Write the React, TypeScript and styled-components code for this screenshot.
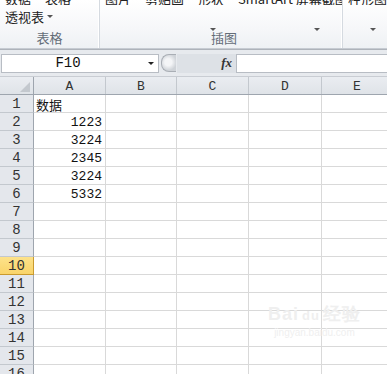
import * as React from "react";
import styled, { createGlobalStyle } from "styled-components";

const GlobalStyle = createGlobalStyle`
  html, body { margin: 0; padding: 0; background: #ffffff; overflow: hidden; }
  body { font-family: "Noto Sans CJK SC", "Noto Sans", sans-serif; }
`;

const columns = ["A", "B", "C", "D", "E"];
const colWidths = [72, 71, 72, 73, 71];
const values: Record<number, { text: string; align: "left" | "right" }> = {
  1: { text: "数据", align: "left" },
  2: { text: "1223", align: "right" },
  3: { text: "3224", align: "right" },
  4: { text: "2345", align: "right" },
  5: { text: "3224", align: "right" },
  6: { text: "5332", align: "right" },
};
const rows = Array.from({ length: 16 }, (_, i) => i + 1);

const App = () => {
  return (
    <Page>
      <GlobalStyle />
      <Ribbon>
        <Group width={100}>
          <TopLine>
            <TopText>数据</TopText>
            <TopText>表格</TopText>
          </TopLine>
          <SecondLine>
            透视表 <Caret />
          </SecondLine>
          <GroupLabel>表格</GroupLabel>
        </Group>
        <Group width={243}>
          <TopLine>
            <TopText>图片</TopText>
            <TopText>剪贴画</TopText>
            <TopText>形状</TopText>
            <TopText>SmartArt 屏幕截图</TopText>
          </TopLine>
          <ArrowRow>
            <ArrowSlot left={105}>
              <Caret />
            </ArrowSlot>
            <ArrowSlot left={209}>
              <Caret />
            </ArrowSlot>
          </ArrowRow>
          <GroupLabel shift={6}>插图</GroupLabel>
        </Group>
        <Group width={50}>
          <TopLine>
            <TopText>柱形图</TopText>
          </TopLine>
          <ArrowRow>
            <ArrowSlot left={22}>
              <Caret />
            </ArrowSlot>
          </ArrowRow>
        </Group>
      </Ribbon>
      <FormulaBar>
        <NameBox>
          <NameText>F10</NameText>
          <Caret dark />
        </NameBox>
        <Splitter>
          <Knob />
        </Splitter>
        <FxArea>
          <Fx>fx</Fx>
        </FxArea>
        <FormulaInput />
      </FormulaBar>
      <Sheet>
        <HeaderRow>
          <Corner>
            <CornerTriangle />
          </Corner>
          {columns.map((c, i) => (
            <ColHeader key={c} style={{ width: colWidths[i] }}>
              {c}
            </ColHeader>
          ))}
        </HeaderRow>
        {rows.map((r) => (
          <Row key={r}>
            <RowHeader active={r === 10}>{r}</RowHeader>
            {columns.map((c, i) => (
              <Cell
                key={c}
                style={{ width: colWidths[i] }}
                align={i === 0 && values[r] ? values[r].align : "left"}
                cjk={i === 0 && r === 1}
              >
                {i === 0 && values[r] ? values[r].text : ""}
              </Cell>
            ))}
          </Row>
        ))}
        <Watermark>
          <Mark>
            Bai<Paw>du</Paw>经验
          </Mark>
          <MarkUrl>jingyan.baidu.com</MarkUrl>
        </Watermark>
      </Sheet>
    </Page>
  );
};

export default App;

const Page = styled.div`
  width: 387px;
  height: 374px;
  overflow: hidden;
  position: relative;
`;

const Ribbon = styled.div`
  display: flex;
  height: 48px;
  background: linear-gradient(#ffffff, #f6f7f9 60%, #eef1f4);
  border-bottom: 1px solid #c6cbd2;
`;

const Group = styled.div<{ width: number }>`
  width: ${(p) => p.width}px;
  flex: none;
  position: relative;
  border-right: 1px solid #d5dae0;
  box-shadow: inset -1px 0 0 #ffffff;
  display: flex;
  flex-direction: column;
  padding-left: 5px;
  box-sizing: border-box;
`;

const TopLine = styled.div`
  display: flex;
  gap: 14px;
  height: 5px;
  overflow: hidden;
  align-items: flex-end;
`;

const TopText = styled.span`
  font-size: 13px;
  line-height: 12px;
  color: #222;
  white-space: nowrap;
`;

const SecondLine = styled.div`
  font-size: 13px;
  line-height: 15px;
  color: #222;
  display: flex;
  align-items: center;
  gap: 3px;
  margin-top: 4px;
`;

const ArrowRow = styled.div`
  position: relative;
  height: 18px;
`;

const ArrowSlot = styled.span<{ left: number }>`
  position: absolute;
  left: ${(p) => p.left}px;
  top: 7px;
`;

const Caret = styled.span<{ dark?: boolean }>`
  display: inline-block;
  width: 0;
  height: 0;
  border-left: 3px solid transparent;
  border-right: 3px solid transparent;
  border-top: 3px solid ${(p) => (p.dark ? "#222" : "#555")};
`;

const GroupLabel = styled.div<{ shift?: number }>`
  position: absolute;
  bottom: 2px;
  left: ${(p) => p.shift ?? 0}px;
  right: 0;
  text-align: center;
  font-size: 13px;
  line-height: 16px;
  color: #646d78;
`;

const FormulaBar = styled.div`
  display: flex;
  align-items: center;
  height: 28px;
  background: #e7eaee;
  border-top: 1px solid #aeb3ba;
  border-bottom: 1px solid #c9cdd3;
  box-sizing: border-box;
`;

const NameBox = styled.div`
  width: 158px;
  height: 19px;
  margin-left: 1px;
  background: #ffffff;
  border: 1px solid #b8bdc4;
  box-sizing: border-box;
  display: flex;
  align-items: center;
  padding-right: 4px;
`;

const NameText = styled.span`
  flex: 1;
  text-align: center;
  font-family: "Liberation Mono", monospace;
  font-size: 14px;
  color: #111;
  padding-right: 14px;
`;

const Splitter = styled.div`
  width: 18px;
  display: flex;
  justify-content: center;
`;

const Knob = styled.div`
  width: 14px;
  height: 16px;
  border-radius: 8px 0 0 8px;
  border: 1px solid #a9aeb5;
  border-right: none;
  background: radial-gradient(circle at 45% 45%, #f4f5f7 30%, #cfd3d8 70%);
`;

const FxArea = styled.div`
  width: 59px;
  height: 19px;
  background: #dde1e6;
  display: flex;
  align-items: center;
  justify-content: flex-end;
  padding-right: 4px;
  box-sizing: border-box;
`;

const Fx = styled.span`
  font-family: "Liberation Serif", serif;
  font-style: italic;
  font-weight: bold;
  font-size: 13px;
  color: #333;
`;

const FormulaInput = styled.div`
  flex: 1;
  height: 19px;
  background: #ffffff;
  border: 1px solid #b8bdc4;
  border-right: none;
  box-sizing: border-box;
`;

const Sheet = styled.div`
  position: relative;
`;

const HeaderRow = styled.div`
  display: flex;
  height: 18px;
  background: linear-gradient(#eaedf1, #dfe3e8);
  border-bottom: 1px solid #9ea5ae;
  box-sizing: border-box;
`;

const Corner = styled.div`
  width: 34px;
  flex: none;
  border-right: 1px solid #9ea5ae;
  box-sizing: border-box;
  position: relative;
`;

const CornerTriangle = styled.div`
  position: absolute;
  right: 3px;
  bottom: 2px;
  width: 0;
  height: 0;
  border-left: 10px solid transparent;
  border-bottom: 10px solid #c3c8ce;
`;

const ColHeader = styled.div`
  flex: none;
  border-right: 1px solid #c3c8ce;
  box-sizing: border-box;
  text-align: center;
  font-family: "Liberation Mono", monospace;
  font-size: 13px;
  line-height: 17px;
  padding-top: 1px;
  color: #333;
`;

const Row = styled.div`
  display: flex;
  height: 18px;
`;

const RowHeader = styled.div<{ active?: boolean }>`
  width: 34px;
  height: 18px;
  flex: none;
  box-sizing: border-box;
  background: ${(p) => (p.active ? "linear-gradient(#fde28a, #f9d46a)" : "#e4e7ec")};
  border-right: 1px solid ${(p) => (p.active ? "#c99a2e" : "#9ea5ae")};
  border-bottom: 1px solid ${(p) => (p.active ? "#c99a2e" : "#c3c8ce")};
  text-align: center;
  font-family: "Liberation Mono", monospace;
  font-size: 14px;
  line-height: 17px;
  padding-top: 1px;
  color: #333;
`;

const Cell = styled.div<{ align: "left" | "right"; cjk?: boolean }>`
  flex: none;
  height: 18px;
  box-sizing: border-box;
  border-right: 1px solid #d9d9d9;
  border-bottom: 1px solid #d9d9d9;
  text-align: ${(p) => p.align};
  padding: 1px 3px 0 2px;
  font-family: ${(p) =>
    p.cjk ? `"Noto Sans CJK SC", sans-serif` : `"Liberation Mono", monospace`};
  font-size: 13px;
  line-height: 17px;
  color: #111;
  white-space: nowrap;
`;

const Watermark = styled.div`
  position: absolute;
  left: 268px;
  top: 227px;
  color: #efefef;
  text-align: center;
  pointer-events: none;
`;

const Mark = styled.div`
  font-family: "Liberation Sans", sans-serif;
  font-weight: bold;
  font-size: 18px;
  line-height: 20px;
  letter-spacing: 1px;
`;

const Paw = styled.span`
  font-size: 13px;
  margin: 0 3px;
`;

const MarkUrl = styled.div`
  font-family: "Liberation Sans", sans-serif;
  font-size: 10px;
  line-height: 14px;
`;
